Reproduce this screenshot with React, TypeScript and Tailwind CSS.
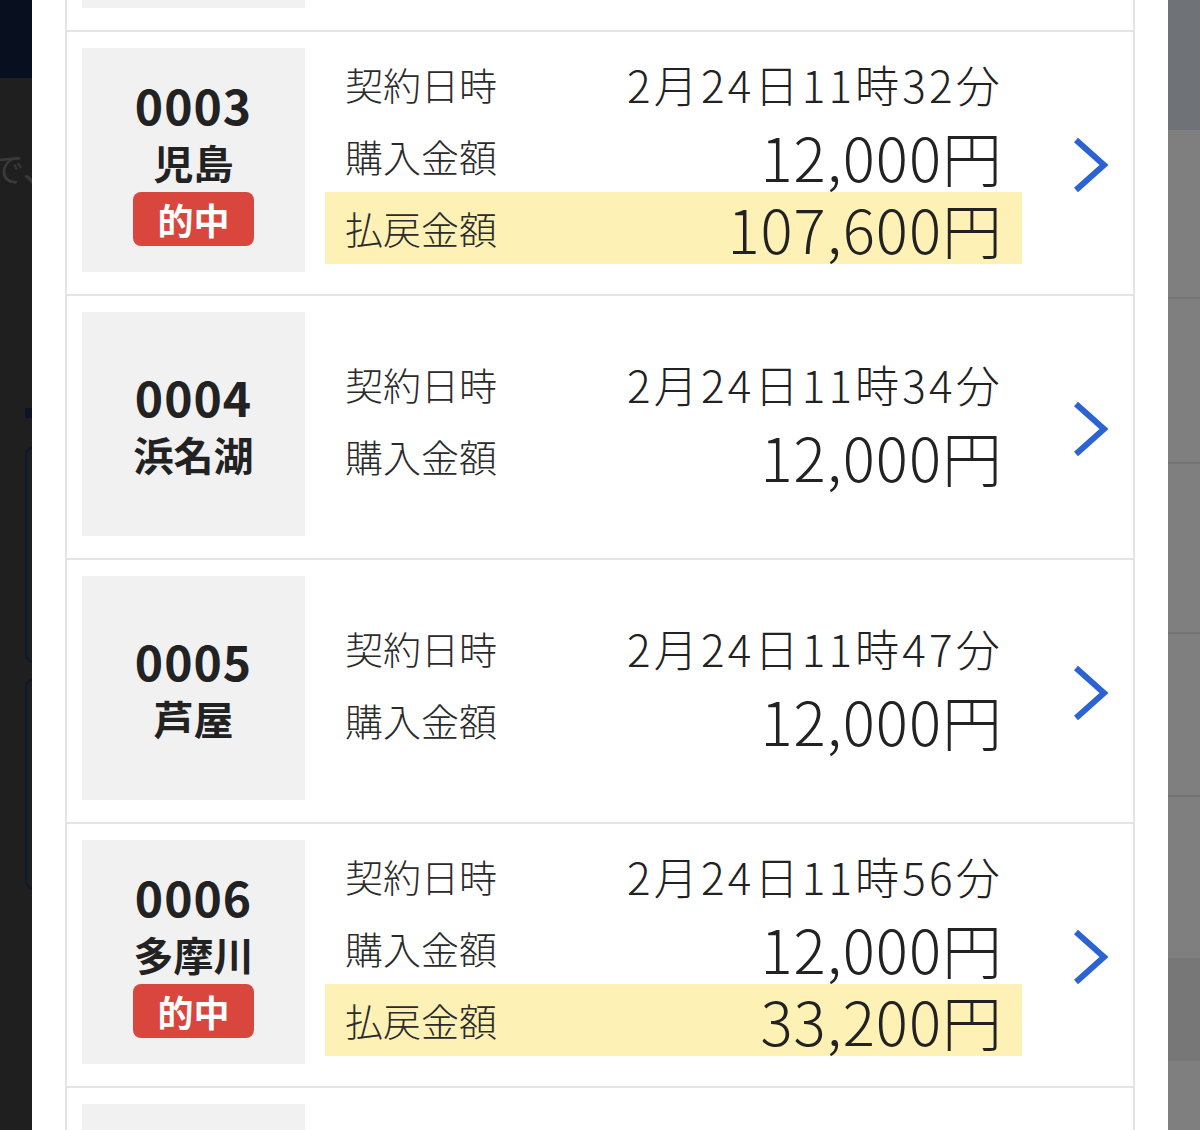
import React from 'react';

type Entry = {
  id: string;
  venue: string;
  hit: boolean;
  time: string;
  amount: string;
  payout?: string;
};

const entries: Entry[] = [
  { id: '0002', venue: '桐生', hit: false, time: '2月24日11時20分', amount: '12,000円' },
  { id: '0003', venue: '児島', hit: true, time: '2月24日11時32分', amount: '12,000円', payout: '107,600円' },
  { id: '0004', venue: '浜名湖', hit: false, time: '2月24日11時34分', amount: '12,000円' },
  { id: '0005', venue: '芦屋', hit: false, time: '2月24日11時47分', amount: '12,000円' },
  { id: '0006', venue: '多摩川', hit: true, time: '2月24日11時56分', amount: '12,000円', payout: '33,200円' },
  { id: '0007', venue: '平和島', hit: false, time: '2月24日12時03分', amount: '12,000円' },
];

const font = { fontFamily: '"Noto Sans CJK JP", "Noto Sans", sans-serif' };

function Row({ label, value, big, highlight }: { label: string; value: string; big?: boolean; highlight?: boolean }) {
  return (
    <div
      className={`flex h-[72px] items-center justify-between pl-[20px] pr-[19px] ${
        highlight ? 'bg-[#fdf1b6]' : ''
      }`}
    >
      <span className="text-[38px] font-light text-[#2b2b2b] leading-none">{label}</span>
      <span
        className={`font-light text-[#222] leading-none ${
          big ? 'text-[60px] tracking-[1px]' : 'text-[44px] tracking-[3.2px]'
        }`}
      >
        {value}
      </span>
    </div>
  );
}

function Card({ entry }: { entry: Entry }) {
  return (
    <div className="flex items-center border-x-2 border-b-2 border-[#e4e4e4] pl-[15px] pt-[16px] pb-[22px]">
      {/* Venue box */}
      <div className="flex h-[224px] w-[223px] shrink-0 flex-col items-center justify-center bg-[#f1f1f1]">
        <div className="text-[48px] font-bold leading-[60px] tracking-[1px] text-[#222]">{entry.id}</div>
        <div className="text-[40px] font-bold leading-[56px] text-[#222]">{entry.venue}</div>
        {entry.hit && (
          <div className="mt-[2px] flex h-[54px] w-[121px] items-center justify-center rounded-[8px] bg-[#d8463e] text-[36px] font-bold text-white">
            的中
          </div>
        )}
      </div>

      {/* Details */}
      <div className="ml-[20px] -mt-[8px] flex w-[697px] flex-col">
        <Row label="契約日時" value={entry.time} />
        <Row label="購入金額" value={entry.amount} big />
        {entry.payout && <Row label="払戻金額" value={entry.payout} big highlight />}
      </div>

      {/* Chevron */}
      <svg className="ml-[51px] mt-[10px]" width="36" height="56" viewBox="0 0 36 56">
        <path d="M3 3 L31 28 L3 53" fill="none" stroke="#2c63d4" strokeWidth="6" />
      </svg>
    </div>
  );
}

export default function App() {
  return (
    <div className="flex h-[1130px] w-[1200px] overflow-hidden bg-white" style={font}>
      {/* Dimmed page behind, left */}
      <div className="flex w-[32px] shrink-0 flex-col overflow-hidden bg-[#1f1f1f]">
        <div className="h-[78px] shrink-0 bg-[#08101f]" />
        <div className="-ml-[10px] mt-[70px] whitespace-nowrap text-[34px] leading-[40px] text-[#3a3a3a]">で、</div>
        <div className="mt-[220px] ml-[25px] h-[10px] shrink-0 bg-[#0b1428]" />
        <div className="mt-[28px] ml-[25px] h-[218px] w-[40px] shrink-0 rounded-l-[10px] border-2 border-[#0d1830] bg-[#1f1f1f]" />
        <div className="mt-[14px] ml-[25px] h-[212px] w-[40px] shrink-0 rounded-l-[10px] border-2 border-[#0d1830] bg-[#1f1f1f]" />
      </div>

      {/* Modal */}
      <div className="flex-1 overflow-hidden bg-white px-[33px]">
        <div className="-mt-[232px]">
          {entries.map((e) => (
            <Card key={e.id} entry={e} />
          ))}
        </div>
      </div>

      {/* Dimmed page behind, right */}
      <div className="flex w-[32px] shrink-0 flex-col bg-[#7f7f7f]">
        <div className="h-[130px] shrink-0 bg-[#6f7377]" />
        <div className="h-[169px] shrink-0 border-b-2 border-[#747474]" />
        <div className="h-[165px] shrink-0 border-b-2 border-[#747474]" />
        <div className="h-[170px] shrink-0 border-b-2 border-[#747474]" />
        <div className="h-[163px] shrink-0 border-b-2 border-[#747474]" />
        <div className="mt-[161px] h-[103px] shrink-0 bg-[#777777]" />
      </div>
    </div>
  );
}
